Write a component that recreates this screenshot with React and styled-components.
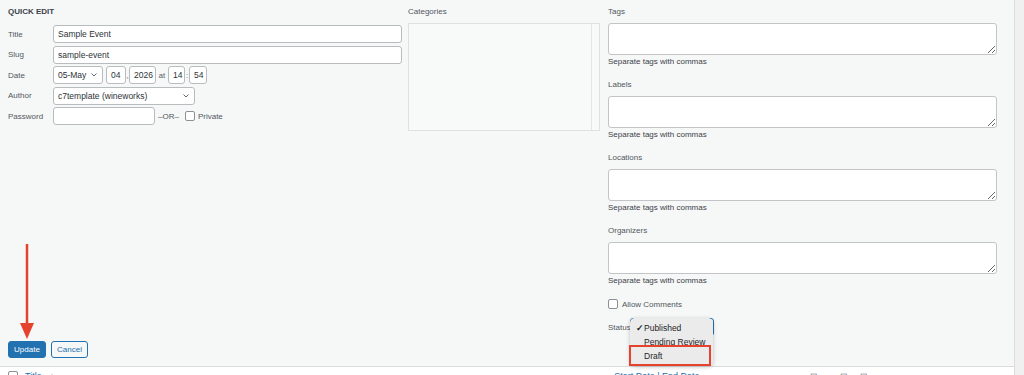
import React from "react";
import styled, { createGlobalStyle } from "styled-components";

const GlobalStyle = createGlobalStyle`
  html, body {
    margin: 0;
    padding: 0;
    background: #f0f0f1;
  }
  body {
    font-family: "Liberation Sans", Arial, sans-serif;
    color: #3c434a;
  }
  * { box-sizing: border-box; }
`;

const Page = styled.div`
  width: 1024px;
  height: 375px;
  overflow: hidden;
  display: flex;
  flex-direction: column;
`;

const EditRow = styled.div`
  position: relative;
  width: 1015px;
  height: 367px;
  flex-shrink: 0;
  display: flex;
  padding: 7px 0 0 8px;
  background: #f6f7f7;
  border-right: 1px solid #dcdcde;
  border-bottom: 1px solid #dcdcde;
`;

const LeftCol = styled.div`
  width: 394px;
  display: flex;
  flex-direction: column;
  padding-bottom: 8px;
`;

const Legend = styled.div`
  font-size: 8px;
  line-height: 10px;
  font-weight: 700;
  text-transform: uppercase;
  color: #3c434a;
  margin-bottom: 8px;
`;

const FieldRow = styled.div`
  display: flex;
  align-items: center;
  height: 18px;
  margin-bottom: 2.5px;
`;

const RowLabel = styled.span`
  width: 45px;
  flex-shrink: 0;
  font-size: 8px;
  color: #50575e;
`;

const TextInput = styled.div`
  width: ${(p) => p.$w}px;
  height: 18px;
  flex-shrink: 0;
  display: flex;
  align-items: center;
  padding: 0 4px;
  background: #fff;
  border: 1px solid #b9bcbf;
  border-radius: 3px;
  font-size: 8.5px;
  color: #2c3338;
`;

const SelectBox = styled(TextInput)`
  justify-content: space-between;
  padding: 0 5px 0 4px;
  border-color: ${(p) => (p.$focus ? "#2271b1" : "#b9bcbf")};
`;

const Sep = styled.span`
  width: ${(p) => p.$w}px;
  flex-shrink: 0;
  text-align: center;
  font-size: 7.5px;
  color: #50575e;
`;

const Box = styled.span`
  width: 10px;
  height: 10px;
  flex-shrink: 0;
  background: #fff;
  border: 1px solid #8c8f94;
  border-radius: 2px;
`;

const Small = styled.span`
  font-size: 8px;
  color: #50575e;
  margin-left: ${(p) => p.$ml || 0}px;
`;

const Buttons = styled.div`
  margin-top: auto;
  display: flex;
  gap: 5px;
`;

const Button = styled.button`
  width: ${(p) => p.$w}px;
  height: 17px;
  padding: 0;
  font-family: inherit;
  font-size: 8px;
  border-radius: 3px;
  border: 1px solid #2271b1;
  background: ${(p) => (p.$primary ? "#2271b1" : "#f6f7f7")};
  color: ${(p) => (p.$primary ? "#fff" : "#2271b1")};
`;

const CatCol = styled.div`
  width: 192px;
  margin-left: 6px;
`;

const ColLabel = styled.div`
  font-size: 8px;
  line-height: 10px;
  color: #50575e;
  margin-bottom: 6px;
`;

const CatList = styled.div`
  height: 108px;
  display: flex;
  justify-content: flex-end;
  background: #f8f9f9;
  border: 1px solid #dfe0e1;
`;

const ScrollTrack = styled.div`
  width: 8px;
  border-left: 1px solid #e4e5e6;
`;

const RightCol = styled.div`
  width: 389px;
  margin-left: 8px;
`;

const TaxBlock = styled.div`
  margin-bottom: 13px;
`;

const TextArea = styled.textarea`
  display: block;
  width: 389px;
  height: 32px;
  margin: 0;
  background: #fff;
  border: 1px solid #c3c4c7;
  border-radius: 3px;
  outline: none;
`;

const Help = styled.div`
  margin-top: 2px;
  font-size: 8px;
  line-height: 10px;
  color: #3c434a;
`;

const CheckRow = styled.div`
  display: flex;
  align-items: center;
  height: 10px;
  margin-bottom: 10px;
`;

const StatusRow = styled.div`
  position: relative;
  display: flex;
  align-items: center;
  height: 16px;
`;

const StatusLabel = styled.span`
  width: 22px;
  font-size: 8px;
  color: #50575e;
`;

const Popup = styled.div`
  position: absolute;
  left: 22px;
  top: -1px;
  width: 83px;
  padding: 3px 0;
  background: #ebebeb;
  border-radius: 5px;
  box-shadow: 0 1px 4px rgba(0, 0, 0, 0.22);
`;

const Option = styled.div`
  display: flex;
  align-items: center;
  height: 14px;
  padding-left: 6px;
  font-size: 8.5px;
  color: #1d2327;
`;

const Check = styled.span`
  width: 8px;
  font-size: 9px;
  font-weight: 700;
`;

const Highlight = styled.div`
  position: absolute;
  left: -1px;
  top: 27px;
  width: 82px;
  height: 21px;
  border: 2.5px solid #e5432d;
`;

const Arrow = styled.svg`
  position: absolute;
  left: 20px;
  top: 244px;
`;

const BottomRow = styled.div`
  width: 1015px;
  height: 8px;
  display: flex;
  align-items: flex-start;
  padding: 4px 0 0 8px;
  overflow: hidden;
  background: #fff;
  border-right: 1px solid #dcdcde;
`;

const Cut = styled.span`
  font-size: 9px;
  line-height: 11px;
  white-space: nowrap;
  color: ${(p) => (p.$link ? "#2271b1" : "#50575e")};
  margin-left: ${(p) => p.$ml}px;
`;

function Chevron() {
  return (
    <svg width="6" height="4" viewBox="0 0 6 4">
      <polyline points="0.5,0.5 3,3 5.5,0.5" fill="none" stroke="#50575e" strokeWidth="0.9" />
    </svg>
  );
}

const taxonomies = ["Tags", "Labels", "Locations", "Organizers"];

export default function App() {
  return (
    <Page>
      <GlobalStyle />
      <EditRow>
        <LeftCol>
          <Legend>Quick Edit</Legend>
          <FieldRow>
            <RowLabel>Title</RowLabel>
            <TextInput $w={349}>Sample Event</TextInput>
          </FieldRow>
          <FieldRow>
            <RowLabel>Slug</RowLabel>
            <TextInput $w={349}>sample-event</TextInput>
          </FieldRow>
          <FieldRow>
            <RowLabel>Date</RowLabel>
            <SelectBox $w={50}>
              05-May <Chevron />
            </SelectBox>
            <Sep $w={3} />
            <TextInput $w={20}>04</TextInput>
            <Sep $w={3}>,</Sep>
            <TextInput $w={27}>2026</TextInput>
            <Sep $w={12}>at</Sep>
            <TextInput $w={17}>14</TextInput>
            <Sep $w={4}>:</Sep>
            <TextInput $w={18}>54</TextInput>
          </FieldRow>
          <FieldRow>
            <RowLabel>Author</RowLabel>
            <SelectBox $w={142}>
              c7template (wineworks) <Chevron />
            </SelectBox>
          </FieldRow>
          <FieldRow>
            <RowLabel>Password</RowLabel>
            <TextInput $w={102} />
            <Small $ml={3}>–OR–</Small>
            <Sep $w={6} />
            <Box />
            <Small $ml={3}>Private</Small>
          </FieldRow>
          <Buttons>
            <Button $primary $w={38}>Update</Button>
            <Button $w={37}>Cancel</Button>
          </Buttons>
        </LeftCol>

        <CatCol>
          <ColLabel>Categories</ColLabel>
          <CatList>
            <ScrollTrack />
          </CatList>
        </CatCol>

        <RightCol>
          {taxonomies.map((t) => (
            <TaxBlock key={t}>
              <ColLabel>{t}</ColLabel>
              <TextArea />
              <Help>Separate tags with commas</Help>
            </TaxBlock>
          ))}
          <CheckRow>
            <Box />
            <Small $ml={4}>Allow Comments</Small>
          </CheckRow>
          <StatusRow>
            <StatusLabel>Status</StatusLabel>
            <SelectBox $w={84} $focus />
            <Popup>
              <Option>
                <Check>✓</Check>Published
              </Option>
              <Option>
                <Check />Pending Review
              </Option>
              <Option>
                <Check />Draft
              </Option>
              <Highlight />
            </Popup>
          </StatusRow>
        </RightCol>

        <Arrow width="14" height="96" viewBox="0 0 14 96">
          <line x1="7" y1="0" x2="7" y2="82" stroke="#e5432d" strokeWidth="2.5" />
          <polygon points="0,79 14,79 7,95" fill="#e5432d" />
        </Arrow>
      </EditRow>

      <BottomRow>
        <Box />
        <Cut $link $ml={7}>Title</Cut>
        <Cut $ml={8}>↓</Cut>
        <Cut $link $ml={560}>Start Date | End Date</Cut>
        <Cut $ml={110}>◻ ⌄ ⌄ ◻ ⌄ ◻</Cut>
      </BottomRow>
    </Page>
  );
}
